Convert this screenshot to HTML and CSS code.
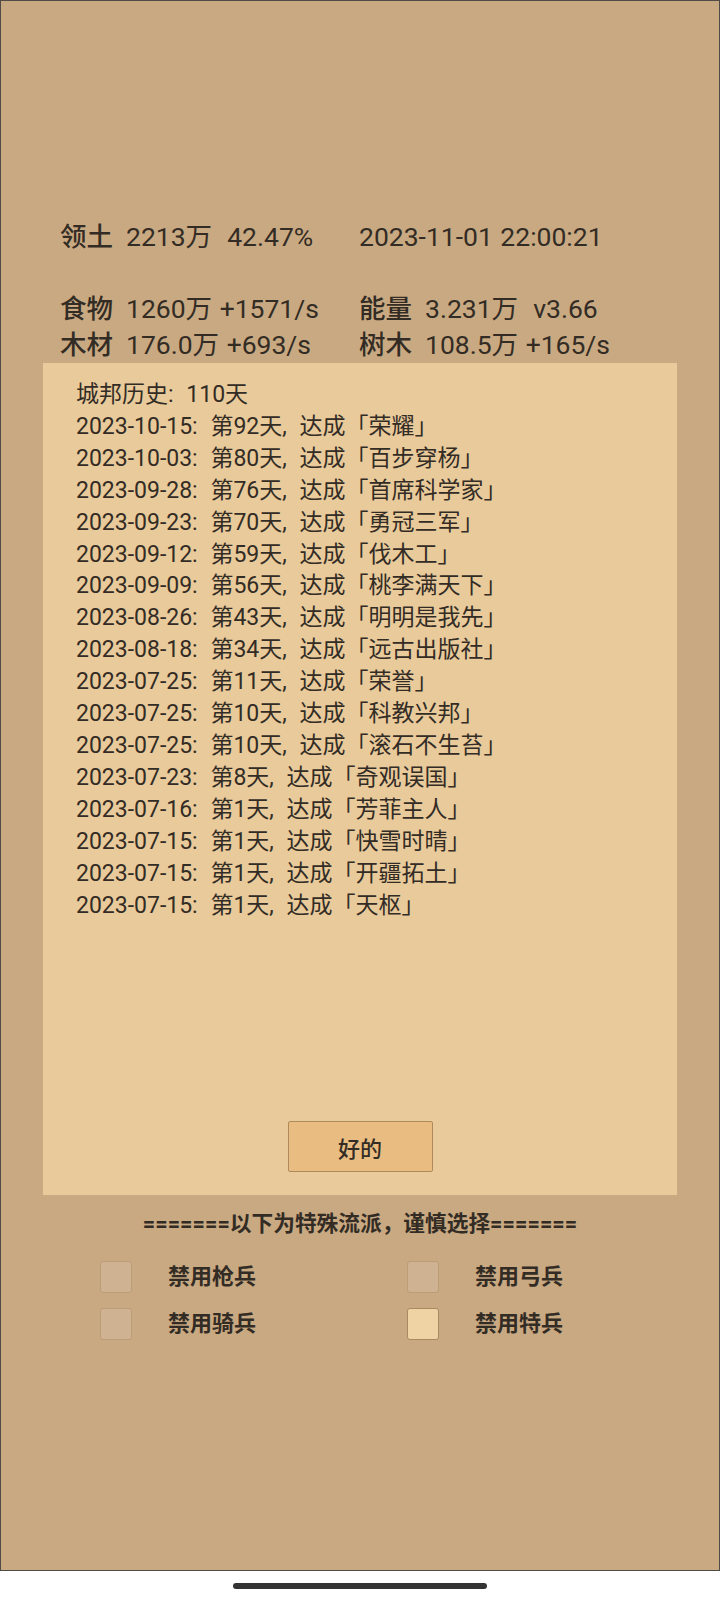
FILE: index.html
```html
<!DOCTYPE html>
<html lang="zh-CN">
<head>
    <meta charset="UTF-8">
    <meta name="viewport" content="width=device-width, initial-scale=1.0">
    <title>城邦历史</title>
    <link rel="stylesheet" href="styles.css">
</head>
<body>
    <div class="app">
        <div class="stats">
            <div class="stat-row">
                <div class="cell"><span class="label">领土</span>2213万  42.47%</div>
                <div class="cell">2023-11-01 22:00:21</div>
            </div>
            <div class="stat-row"></div>
            <div class="stat-row">
                <div class="cell"><span class="label">食物</span>1260万 +1571/s</div>
                <div class="cell"><span class="label">能量</span>3.231万  v3.66</div>
            </div>
            <div class="stat-row">
                <div class="cell"><span class="label">木材</span>176.0万 +693/s</div>
                <div class="cell"><span class="label">树木</span>108.5万 +165/s</div>
            </div>
        </div>

        <div class="panel">
            <div class="history">
                <p>城邦历史: 110天</p>
                <p>2023-10-15: 第92天, 达成「荣耀」</p>
                <p>2023-10-03: 第80天, 达成「百步穿杨」</p>
                <p>2023-09-28: 第76天, 达成「首席科学家」</p>
                <p>2023-09-23: 第70天, 达成「勇冠三军」</p>
                <p>2023-09-12: 第59天, 达成「伐木工」</p>
                <p>2023-09-09: 第56天, 达成「桃李满天下」</p>
                <p>2023-08-26: 第43天, 达成「明明是我先」</p>
                <p>2023-08-18: 第34天, 达成「远古出版社」</p>
                <p>2023-07-25: 第11天, 达成「荣誉」</p>
                <p>2023-07-25: 第10天, 达成「科教兴邦」</p>
                <p>2023-07-25: 第10天, 达成「滚石不生苔」</p>
                <p>2023-07-23: 第8天, 达成「奇观误国」</p>
                <p>2023-07-16: 第1天, 达成「芳菲主人」</p>
                <p>2023-07-15: 第1天, 达成「快雪时晴」</p>
                <p>2023-07-15: 第1天, 达成「开疆拓土」</p>
                <p>2023-07-15: 第1天, 达成「天枢」</p>
            </div>
            <button class="ok-btn">好的</button>
        </div>

        <div class="divider">=======以下为特殊流派，谨慎选择=======</div>

        <div class="options">
            <div class="option"><span class="box"></span>禁用枪兵</div>
            <div class="option"><span class="box"></span>禁用弓兵</div>
            <div class="option"><span class="box"></span>禁用骑兵</div>
            <div class="option"><span class="box checked"></span>禁用特兵</div>
        </div>
    </div>
    <div class="home">
        <span class="home-bar"></span>
    </div>
</body>
</html>
```

FILE: styles.css
```css
body {
    margin: 0;
    padding: 0;
    background-color: #ffffff;
    font-family: Roboto, "Noto Sans CJK SC", sans-serif;
    color: #332c25;
}
.app {
    height: 1571px;
    box-sizing: border-box;
    border: 1px solid #4f4b46;
    background-color: #c9a981;
    padding-top: 218px;
}
.stats {
    padding-left: 59px;
    font-size: 26.5px;
    line-height: 36px;
    word-spacing: 1px;
}
.stat-row {
    display: grid;
    grid-template-columns: 299px auto;
    height: 36px;
}
.cell {
    white-space: pre;
}
.label {
    margin-right: 13px;
    font-weight: 500;
}
.panel {
    margin: 0 42px;
    height: 832px;
    box-sizing: border-box;
    background-color: #e9ca9b;
    padding: 16px 0 23px;
    display: flex;
    flex-direction: column;
}
.history {
    padding-left: 33px;
    font-size: 23px;
    line-height: 31.9px;
    word-spacing: 7px;
}
.history p {
    margin: 0;
}
.ok-btn {
    margin: auto auto 0;
    width: 145px;
    height: 51px;
    background-color: #e9bd81;
    border: 1px solid #b08a5a;
    border-radius: 2px;
    font-family: Roboto, "Noto Sans CJK SC", sans-serif;
    font-size: 22px;
    font-weight: 500;
    color: #332c25;
    padding: 0;
}
.divider {
    margin-top: 13px;
    text-align: center;
    font-size: 21.7px;
    font-weight: bold;
    line-height: 32px;
}
.options {
    margin: 21px 0 0 99px;
    display: grid;
    grid-template-columns: 307px 307px;
    row-gap: 15px;
}
.option {
    display: flex;
    align-items: center;
    gap: 36px;
    font-size: 22px;
    font-weight: bold;
    line-height: 32px;
}
.box {
    width: 32px;
    height: 32px;
    box-sizing: border-box;
    border: 1px solid #bb9d78;
    border-radius: 3px;
    background-color: #cfb291;
}
.box.checked {
    background-color: #efd3a5;
    border-color: #a98b63;
}
.home {
    height: 29px;
    display: flex;
    justify-content: center;
    align-items: center;
}
.home-bar {
    width: 254px;
    height: 6px;
    border-radius: 3px;
    background-color: #333333;
}
```
